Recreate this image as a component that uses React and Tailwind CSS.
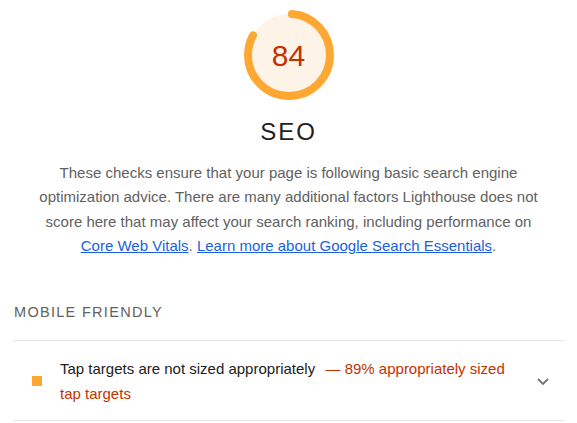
export default function App() {
  const r = 41;
  const c = 2 * Math.PI * r;
  const pct = 0.84;
  return (
    <div className="w-[577px] h-[423px] bg-white overflow-hidden" style={{ fontFamily: '"Liberation Sans", Arial, sans-serif' }}>
      <div className="flex flex-col items-center pt-[7px]">
        <div className="relative w-[96px] h-[96px]">
          <svg width="96" height="96" viewBox="0 0 96 96" className="absolute inset-0">
            <circle cx="48" cy="48" r={r} fill="#fdf4e7" />
            <circle
              cx="48"
              cy="48"
              r={r}
              fill="none"
              stroke="#ffa733"
              strokeWidth="8"
              strokeLinecap="round"
              strokeDasharray={`${c * pct - 6} ${c}`}
              strokeDashoffset={-3}
              transform="rotate(-90 48 48)"
            />
          </svg>
          <div className="absolute inset-0 flex items-center justify-center text-[30px] text-[#c33300]">84</div>
        </div>
        <div className="mt-[14px] text-[24px] tracking-[2px] leading-[30px] text-[#212121]">SEO</div>
        <p className="mt-[14px] w-[510px] text-center text-[15px] leading-[24.3px] text-[#616161]">
          These checks ensure that your page is following basic search engine optimization advice. There are many additional factors Lighthouse does not score here that may affect your search ranking, including performance on{" "}
          <a className="underline text-[#1a5fe0]">Core Web Vitals</a>.{" "}
          <a className="underline text-[#1a5fe0]">Learn more about Google Search Essentials</a>.
        </p>
      </div>
      <div className="px-[13px] mt-[44px]">
        <div className="pl-[1px] pb-[18px] text-[14.5px] tracking-[1.3px] text-[#616161] leading-[20px]">MOBILE FRIENDLY</div>
        <div className="border-t border-b border-[#e4e4e4] flex items-center pt-[15px] pb-[14px]">
          <div className="w-[10px] h-[10px] bg-[#ffa733] ml-[19px] mr-[18px] shrink-0" />
          <div className="w-[455px] text-[15px] leading-[25px] text-[#212121]">
            Tap targets are not sized appropriately{" "}
            <span className="text-[#c33300] ml-[2px]">&nbsp;— 89% appropriately sized tap targets</span>
          </div>
          <div className="flex-1" />
          <svg width="12" height="7" viewBox="0 0 12 7" className="mr-[15px]" fill="none" stroke="#757575" strokeWidth="1.8">
            <path d="M1 1l5 5 5-5" />
          </svg>
        </div>
      </div>
    </div>
  );
}
